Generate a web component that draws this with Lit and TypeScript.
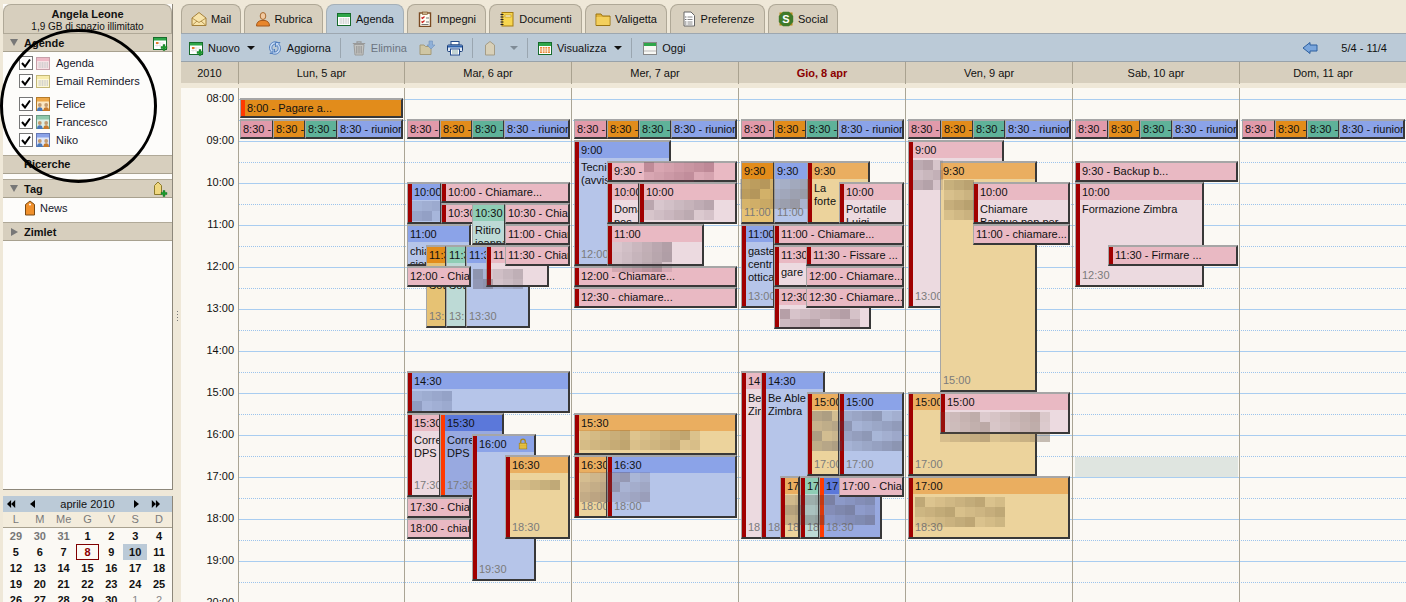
import { LitElement, html, svg, css } from "lit";
import { customElement } from "lit/decorators.js";

// --- icons, all on a 16 unit box
const svg16 = (body: unknown, size = 16) =>
  html`<svg class="ic" width=${size} height=${size} viewBox="0 0 16 16">${body}</svg>`;

const plus = svg`<path d="M11 9.5h2v2h2v2h-2v2h-2v-2H9v-2h2z" fill="#1c9a2e" stroke="#0b6a19" stroke-width=".4"/>`;
const calBase = (top: string, line: string, fill = "#fff") => svg`
  <rect x="1.5" y="2.5" width="13" height="12" fill=${fill} stroke=${line}/>
  <rect x="2" y="3" width="12" height="3" fill=${top}/>
  <path d="M3 8h10M3 10h10M3 12h10M5 7v6M7.5 7v6M10 7v6M12.5 7v6" stroke="#ccc" stroke-width=".7"/>`;
const calPeople = (top: string, line: string, fill: string) => svg`
  <rect x="1.5" y="1.5" width="13" height="13" fill=${fill} stroke=${line}/>
  <rect x="2" y="2" width="12" height="3.500" fill=${top}/>
  <circle cx="4.800" cy="9" r="1.900" fill="#c39a6e"/><path d="M2 15c0-3 1-3.800 2.800-3.800s2.800.8 2.800 3.800z" fill="#4a78b8"/>
  <circle cx="11.200" cy="9" r="1.900" fill="#c39a6e"/><path d="M8.400 15c0-3 1-3.800 2.800-3.800s2.800.8 2.800 3.800z" fill="#c77a2c"/>`;

const icons: Record<string, () => unknown> = {
  mail: () => svg16(svg`
    <path d="M1 7l7-5.500 7 5.500v7.500H1z" fill="#f7e3aa" stroke="#a4803a"/>
    <path d="M1 7l7 4.500L15 7M1 14.500l5-4.500M15 14.500l-5-4.500" fill="none" stroke="#a4803a" stroke-width=".8"/>`),
  person: () => svg16(svg`
    <ellipse cx="8" cy="5" rx="2.800" ry="3.500" fill="#f1c9a0" stroke="#a86a30"/>
    <path d="M1.500 15c0-3.500 2-5 4.500-5.500h4c2.500.5 4.500 2 4.500 5.500z" fill="#e8862c" stroke="#a4591d"/>`),
  cal: () => svg16(calBase("#2fa64a", "#176b2c")),
  tasks: () => svg16(svg`
    <rect x="2.500" y="2" width="11" height="13.500" fill="#fffdf4" stroke="#7a4a22" stroke-width="1.400"/>
    <rect x="5.500" y="1" width="5" height="2.500" fill="#c9b28a" stroke="#7a4a22" stroke-width=".6"/>
    <path d="M4.500 6.500l1 1 2-2M4.500 10.500l1 1 2-2" fill="none" stroke="#c22" stroke-width="1.200"/>
    <path d="M9 7h3M9 11h3M4.500 13.500h7" stroke="#777"/>`),
  notebook: () => svg16(svg`
    <rect x="3" y="1.500" width="11" height="13.500" fill="#f7d64f" stroke="#a67d12"/>
    <rect x="6" y="4" width="6" height="2" fill="#fff6c8" stroke="#a67d12" stroke-width=".5"/>
    <path d="M1.500 3.500h3M1.500 6h3M1.500 8.500h3M1.500 11h3M1.500 13.500h3" stroke="#222"/>`),
  folder: () => svg16(svg`
    <path d="M1 3h5l1.500 2H15v9.500H1z" fill="#e2b53c" stroke="#9a7412"/>
    <rect x="1.500" y="6" width="13" height="8" fill="#f3cf5c"/>`),
  prefs: () => svg16(svg`
    <path d="M3 1h7l3.500 3.500V15H3z" fill="#fff" stroke="#666"/>
    <path d="M6.500 6h5M6.500 8.500h5M6.500 11h5M6.500 13h5" stroke="#888"/>
    <path d="M4.300 6h1M4.300 8.500h1M4.300 11h1M4.300 13h1" stroke="#333"/>`),
  social: () => svg16(svg`
    <rect x="1.500" y="1.500" width="13" height="13" fill="#b38a1a"/>
    <path d="M5 .8h6l4.200 4.200v6L11 15.200H5L.8 11V5z" fill="#3f7a2a"/>
    <text x="8" y="12" text-anchor="middle" font-family="Liberation Sans" font-weight="700" font-size="11" fill="#fff">S</text>`),
  calnew: () => svg16(svg`
    <rect x="1.500" y="2.500" width="13" height="12" fill="#fff" stroke="#176b2c"/>
    <rect x="2" y="3" width="12" height="2.500" fill="#2fa64a"/>
    <path d="M3 8h9M3 10.500h6M5 7v5M8 7v5" stroke="#ddd" stroke-width=".7"/>
    <rect x="4" y="7" width="2.500" height="2" fill="#e67a2c"/>${plus}`),
  refresh: () => svg16(svg`
    <path d="M11 2.500c-4-2-8 .5-8.500 4.500-.2 2 .5 3.800 2 5l-1.500 1.500H7.500V9L6 10.500C4.500 9 4.500 6.500 6 5c1-1 3-1.500 4.500-.5z" fill="#c3d8f3" stroke="#3d6fb5" stroke-width=".8"/>
    <path d="M5 13.500c4 2 8-.5 8.500-4.500.2-2-.5-3.800-2-5L13 2.500H8.500V7L10 5.500c1.500 1.500 1.500 4 0 5.500-1 1-3 1.500-4.500.5z" fill="#c3d8f3" stroke="#3d6fb5" stroke-width=".8"/>`),
  trash: () => svg16(svg`
    <path d="M1.800 3.500h12.400M6 3V1.800h4V3" fill="none" stroke="#999" stroke-width="1.200"/>
    <path d="M3 4.500h10L12 15H4z" fill="#c3c3c0" stroke="#9c9c9a"/>
    <path d="M5.800 6v7.500M8 6v7.500M10.200 6v7.500" stroke="#929290"/>`),
  movefolder: () => svg16(svg`
    <path d="M1 5h4l1.500 1.500H12v8H1z" fill="#cfc6a4" stroke="#a49a78"/>
    <path d="M10 1h3.500v4H16l-4 4-4-4h2z" fill="#8fb0d8" stroke="#6f92bd" stroke-width=".6"/>`),
  print: () => svg16(svg`
    <rect x="4" y="1.500" width="8" height="3.500" fill="#fff" stroke="#244a8c"/>
    <rect x=".5" y="5" width="15" height="6.500" rx="1" fill="#dde7f4" stroke="#1b3f78"/>
    <rect x="1" y="5.500" width="14" height="2" fill="#2f63ae"/>
    <rect x="3.500" y="9" width="9" height="6" fill="#fff" stroke="#244a8c"/>
    <path d="M5 11h6M5 13h6" stroke="#8aa"/>`),
  tag: () => svg16(svg`
    <path d="M3.500 15V5L8 1.500 12.500 5v10z" fill="#d8d0b8" stroke="#a49c86"/>`),
  view: () => svg16(svg`
    <rect x="1.500" y="2.500" width="13" height="12" fill="#fff" stroke="#176b2c"/>
    <rect x="2" y="3" width="12" height="3" fill="#2fa64a"/>
    <rect x="3" y="7" width="10" height="6" fill="#ea8a3a"/>
    <path d="M3 9h10M3 11h10M5.500 7v6M8 7v6M10.500 7v6" stroke="#fff" stroke-width=".7"/>`),
  today: () => svg16(svg`
    <rect x="1.500" y="2.500" width="13" height="12" fill="#f8f8f4" stroke="#888"/>
    <rect x="2" y="3" width="12" height="3" fill="#2fa64a"/>
    <path d="M2 11h12" stroke="#bbb"/>`),
  back: () => svg16(svg`
    <path d="M8 2.500L1 8l7 5.500V11h7V5H8z" fill="#7aa6dc" stroke="#2c5f9e"/>`),
  calpink: () => svg16(calBase("#eeb9c6", "#c8a0aa", "#f7e2e6")),
  calyellow: () => svg16(calBase("#f7ecac", "#c4b878", "#fdf8d8")),
  calorange: () => svg16(calPeople("#eea848", "#b57b2a", "#fbe8c4")),
  calgreen: () => svg16(calPeople("#8fc8ac", "#6a9a82", "#dcefe6")),
  calblue: () => svg16(calPeople("#8ba3e8", "#6478b4", "#dfe6f7")),
  tagadd: () => svg16(svg`
    <path d="M2.500 13.500V4.500L6 1l3.500 3.500v9z" fill="#efd77f" stroke="#8c7a2c"/>${plus}`),
  tagorange: () => svg16(svg`
    <path d="M3.500 15V4.500L8 1l4.500 3.500V15z" fill="#f0902c" stroke="#7a4a14"/>
    <circle cx="8" cy="4.500" r="1" fill="#fff"/>`),
  lock: () => svg16(svg`
    <path d="M5 7V4.500a3 3 0 016 0V7" fill="none" stroke="#a88516" stroke-width="1.600"/>
    <rect x="3" y="7" width="10" height="7.500" fill="#f2cd4e" stroke="#a88516"/>
    <path d="M3.500 9.500h9M3.500 12h9" stroke="#c9a024"/>`, 12),
};
const icon = (n: string) => icons[n]();

// --- data
const tabs = [
  { label: "Mail", icon: "mail", w: 60 },
  { label: "Rubrica", icon: "person", w: 79 },
  { label: "Agenda", icon: "cal", w: 78, active: true },
  { label: "Impegni", icon: "tasks", w: 79 },
  { label: "Documenti", icon: "notebook", w: 93 },
  { label: "Valigetta", icon: "folder", w: 82 },
  { label: "Preferenze", icon: "prefs", w: 95 },
  { label: "Social", icon: "social", w: 70 },
];

const days = ["Lun, 5 apr", "Mar, 6 apr", "Mer, 7 apr", "Gio, 8 apr", "Ven, 9 apr", "Sab, 10 apr", "Dom, 11 apr"];

type Appt = {
  x: number; y: number; r: number; b: number; c: string;
  head: string; body?: string[]; foot?: string; s?: string; lock?: boolean;
};
const ev = (x: number, y: number, r: number, b: number, c: string, head: string, s = "", body?: string[], foot?: string, lock = false): Appt =>
  ({ x, y, r, b, c, head, s, body, foot, lock });

// the recurring 8:30 row repeats on each day
const daily = (x: number): Appt[] => [
  ev(x, 120, x + 34, 140, "a-pink", "8:30 - riunione"),
  ev(x + 33, 120, x + 66, 140, "a-orange", "8:30 - riunione"),
  ev(x + 65, 120, x + 98, 140, "a-green", "8:30 - riunione"),
  ev(x + 97, 120, x + 163, 140, "a-blue", "8:30 - riunione"),
];

const appts: Appt[] = [
  ev(240, 99, 403, 119, "a-orange", "8:00 - Pagare a...", "hot"),
  ...daily(240), ...daily(407), ...daily(574), ...daily(741), ...daily(908), ...daily(1075), ...daily(1242),
  // Tuesday
  ev(407, 183, 442, 225, "blue", "10:00", "red"),
  ev(441, 204, 474, 225, "pink", "10:30", "red"),
  ev(472, 204, 506, 246, "green", "10:30", "", ["Ritiro", "joanna"]),
  ev(407, 225, 471, 267, "blue", "11:00", "", ["chia", "sier"]),
  ev(426, 246, 447, 329, "orange2", "11:30", "", ["", "Sot"], "13:"),
  ev(446, 246, 467, 329, "green", "11:30", "", ["", "Sot"], "13:"),
  ev(466, 246, 530, 329, "blue", "11:30", "", undefined, "13:30"),
  ev(486, 246, 549, 288, "pink", "11:30", "red"),
  ev(407, 267, 471, 288, "pink", "12:00 - Chiamare..."),
  ev(441, 183, 570, 204, "pink", "10:00 - Chiamare...", "red"),
  ev(505, 204, 570, 225, "pink", "10:30 - Chiamare..."),
  ev(505, 225, 570, 246, "pink", "11:00 - Chiamare..."),
  ev(505, 246, 570, 267, "pink", "11:30 - Chiamare..."),
  ev(407, 372, 570, 414, "blue", "14:30", "red"),
  ev(407, 414, 441, 498, "pink", "15:30", "red", ["Corretto", "DPS"], "17:30"),
  ev(440, 414, 504, 498, "dblue", "15:30", "hot", ["Corretto", "DPS"], "17:30"),
  ev(472, 435, 536, 582, "blue", "16:00", "red", undefined, "19:30", true),
  ev(505, 456, 570, 540, "orange", "16:30", "red", undefined, "18:30"),
  ev(407, 498, 471, 519, "pink", "17:30 - Chiamare..."),
  ev(407, 519, 471, 540, "pink", "18:00 - chiamare..."),
  // Wednesday
  ev(574, 141, 671, 267, "blue", "9:00", "red", ["Tecnico", "(avvisare)"], "12:00"),
  ev(607, 162, 737, 183, "pink", "9:30 -", "red"),
  ev(607, 183, 640, 225, "pink", "10:00", "red", ["Domanda", "pos"]),
  ev(639, 183, 737, 225, "pink", "10:00", "red"),
  ev(607, 225, 704, 267, "pink", "11:00", "red"),
  ev(574, 267, 737, 288, "pink", "12:00 - Chiamare...", "red"),
  ev(574, 288, 737, 309, "pink", "12:30 - chiamare...", "red"),
  ev(574, 414, 737, 456, "orange", "15:30", "red"),
  ev(574, 456, 608, 519, "orange", "16:30", "red", undefined, "18:00"),
  ev(607, 456, 737, 519, "blue", "16:30", "red", undefined, "18:00"),
  // Thursday
  ev(741, 162, 775, 225, "orange2", "9:30", "", undefined, "11:00"),
  ev(774, 162, 838, 225, "blue", "9:30", "", undefined, "11:00"),
  ev(807, 162, 870, 225, "orange", "9:30", "red", ["La", "forte"]),
  ev(839, 183, 904, 225, "pink", "10:00", "red", ["Portatile", "Luigi"]),
  ev(741, 225, 775, 309, "blue", "11:00", "red", ["gaste", "centr", "ottica"], "13:00"),
  ev(774, 246, 808, 288, "pink", "11:30", "red", ["gare"]),
  ev(774, 288, 871, 330, "pink", "12:30", "red"),
  ev(774, 225, 904, 246, "pink", "11:00 - Chiamare...", "red"),
  ev(806, 246, 904, 267, "pink", "11:30 - Fissare ...", "red"),
  ev(806, 267, 904, 288, "pink", "12:00 - Chiamare..."),
  ev(806, 288, 904, 309, "pink", "12:30 - Chiamare..."),
  ev(741, 372, 775, 540, "pink", "14:30", "red", ["Be Able", "Zimbra"], "18:30"),
  ev(761, 372, 825, 540, "blue", "14:30", "red", ["Be Able", "Zimbra"], "18:30"),
  ev(807, 393, 840, 477, "orange", "15:00", "red", undefined, "17:00"),
  ev(839, 393, 904, 477, "blue", "15:00", "red", undefined, "17:00"),
  ev(780, 477, 800, 540, "orange", "17:00", "red", undefined, "18"),
  ev(800, 477, 820, 540, "green", "17:00", "red", undefined, "18"),
  ev(819, 477, 882, 540, "dblue", "17:00", "hot", undefined, "18:30"),
  ev(839, 477, 904, 498, "pink", "17:00 - Chiamare..."),
  // Friday
  ev(908, 141, 1004, 309, "pink", "9:00", "red", undefined, "13:00"),
  ev(940, 162, 1037, 393, "orange", "9:30", "", undefined, "15:00"),
  ev(973, 183, 1070, 225, "pink", "10:00", "red", ["Chiamare", "Banque pop per"]),
  ev(973, 225, 1070, 246, "pink", "11:00 - chiamare..."),
  ev(908, 393, 1037, 477, "orange", "15:00", "red", undefined, "17:00"),
  ev(940, 393, 1070, 435, "pink", "15:00", "red"),
  ev(908, 477, 1070, 540, "orange", "17:00", "red", undefined, "18:30"),
  // Saturday
  ev(1075, 162, 1238, 183, "pink", "9:30 - Backup b...", "red"),
  ev(1075, 183, 1204, 288, "pink", "10:00", "red", ["Formazione Zimbra"], "12:30"),
  ev(1108, 246, 1238, 267, "pink", "11:30 - Firmare ...", "red"),
];

// blurred out patches of the original, in page coordinates
type Patch = { x: number; y: number; cols: number; rows: number; tint: string };
const patches: Patch[] = [
  { x: 412, y: 201, cols: 3, rows: 2, tint: "90,100,140" },
  { x: 473, y: 269, cols: 5, rows: 2, tint: "70,60,70" },
  { x: 412, y: 391, cols: 4, rows: 2, tint: "80,90,130" },
  { x: 510, y: 480, cols: 5, rows: 1, tint: "100,80,40" },
  { x: 644, y: 162, cols: 7, rows: 2, tint: "120,60,80" },
  { x: 644, y: 200, cols: 7, rows: 2, tint: "100,80,90" },
  { x: 612, y: 242, cols: 6, rows: 3, tint: "80,60,70" },
  { x: 580, y: 430, cols: 12, rows: 2, tint: "120,90,40" },
  { x: 580, y: 472, cols: 7, rows: 3, tint: "90,70,80" },
  { x: 740, y: 179, cols: 7, rows: 3, tint: "100,80,50" },
  { x: 780, y: 309, cols: 8, rows: 2, tint: "90,60,70" },
  { x: 812, y: 411, cols: 9, rows: 4, tint: "70,70,90" },
  { x: 785, y: 495, cols: 9, rows: 3, tint: "70,60,60" },
  { x: 913, y: 160, cols: 3, rows: 3, tint: "90,70,80" },
  { x: 944, y: 180, cols: 3, rows: 4, tint: "100,80,40" },
  { x: 940, y: 412, cols: 11, rows: 3, tint: "110,90,70" },
  { x: 915, y: 497, cols: 9, rows: 3, tint: "110,90,50" },
];

const weeks = [
  [29, 30, 31, 1, 2, 3, 4],
  [5, 6, 7, 8, 9, 10, 11],
  [12, 13, 14, 15, 16, 17, 18],
  [19, 20, 21, 22, 23, 24, 25],
  [26, 27, 28, 29, 30, 1, 2],
];

@customElement("app-root")
export class AppRoot extends LitElement {
  static styles = css`
    :host {
      display: block;
      width: 1406px;
      height: 602px;
      overflow: hidden;
      position: relative;
      background: #efe8d8;
      font: 11px "Liberation Sans", Arial, sans-serif;
      color: #111;
    }
    .ic { display: block; flex: none; }
    .shell { display: flex; height: 602px; }

    /* left column */
    .side { width: 170px; margin-left: 3px; display: flex; flex-direction: column; flex: none; }
    .panel {
      height: 486px;
      flex: none;
      margin-top: 4px;
      background: #fdfcfa;
      border-right: 1px solid #8d877a;
      border-bottom: 1px solid #8d877a;
      box-sizing: border-box;
      display: flex;
      flex-direction: column;
    }
    .acct {
      height: 29px;
      flex: none;
      background: #d7cfbe;
      border: 1px solid #b0a998;
      border-bottom: none;
      border-radius: 8px 8px 0 0;
      box-sizing: border-box;
      text-align: center;
      padding-top: 3px;
    }
    .acct b { display: block; line-height: 13px; }
    .acct span { display: block; font-size: 10px; line-height: 11px; }
    .sec {
      height: 19px;
      flex: none;
      background: #d7cfbe;
      border-top: 1px solid #b0a998;
      border-bottom: 1px solid #a8a18f;
      box-sizing: border-box;
      display: flex;
      align-items: center;
      padding-left: 4px;
      font-weight: 700;
    }
    .sec .lbl { margin-left: 6px; flex: 1; }
    .sec.nogl .lbl { margin-left: 17px; margin-top: -1px; }
    .sec .ic { margin-right: 4px; }
    .tri-d { width: 0; height: 0; border: 4px solid transparent; border-top: 7px solid #777; border-bottom: none; margin-left: 3px; }
    .tri-r { width: 0; height: 0; border: 4px solid transparent; border-left: 7px solid #777; border-right: none; margin-left: 4px; }
    .list { padding-top: 2px; padding-bottom: 6px; flex: none; }
    .row { height: 18px; display: flex; align-items: center; padding-left: 16px; flex: none; }
    .row.gap { margin-top: 5px; }
    .chk {
      width: 12px;
      height: 12px;
      border: 1px solid #777;
      background: #fff;
      margin-right: 2px;
      display: flex;
      align-items: center;
      justify-content: center;
    }
    .row .name { margin-left: 5px; color: #15172a; }
    .tagrow { padding-left: 19px; margin-top: 1px; margin-bottom: 5px; }
    .tagrow .name { margin-left: 2px; }
    .spacer5 { height: 5px; flex: none; }

    .mini { margin-top: 6px; background: #fbf9f4; border-right: 1px solid #8d877a; flex: none; }
    .mini-head {
      height: 16px;
      background: #bbcad7;
      display: flex;
      align-items: center;
      padding: 0 12px 0 4px;
    }
    .mini-head .title { flex: 1; text-align: center; padding-left: 6px; }
    .mini-head svg { display: block; }
    .mini-head .n2 { margin-left: 14px; }
    .mini-head .n3 { margin-right: 12px; }
    .dow, .wk { display: grid; grid-template-columns: repeat(7, 1fr); text-align: center; padding: 0 1px; }
    .dow { height: 16px; line-height: 15px; background: #f3ecdc; border-bottom: 1px solid #a8a18f; box-sizing: border-box; color: #7a7a7a; }
    .wk { height: 16px; line-height: 16px; font-weight: 700; }
    .wk .off { color: #777; }
    .wk .off2 { color: #888; font-weight: 400; }
    .wk .today { outline: 1px solid #800000; outline-offset: -1px; color: #8b0000; }
    .wk .sel { background: #bbcad7; }

    /* sash */
    .sash { width: 8px; flex: none; display: flex; align-items: center; justify-content: center; }
    .grip { width: 3px; height: 12px; background: radial-gradient(circle, #777 .6px, transparent .8px) 0 0 / 3px 3px; margin-top: 30px; }

    /* main */
    .main { flex: 1; display: flex; flex-direction: column; min-width: 0; }
    .tabs { display: flex; gap: 3px; height: 33px; padding-top: 4px; box-sizing: border-box; flex: none; }
    .tab {
      background: #d7cfbe;
      border: 1px solid #afa897;
      border-bottom: none;
      border-radius: 8px 8px 0 0;
      box-sizing: border-box;
      display: flex;
      align-items: center;
      justify-content: center;
      gap: 4px;
    }
    .tab.on { background: #bbcad7; border-color: #a5b0b8; }
    .bar {
      height: 29px;
      flex: none;
      background: #bbcad7;
      border-top: 1px solid #9da7b0;
      border-bottom: 1px solid #98a2aa;
      box-sizing: border-box;
      display: flex;
      align-items: center;
      padding-left: 7px;
    }
    .bar .it { display: flex; align-items: center; gap: 4px; }
    .bar .dim { color: #6b7480; }
    .bar .sep { width: 1px; height: 20px; background: #9aa6b0; }
    .bar .arr { width: 0; height: 0; border: 4px solid transparent; border-top: 4px solid #111; border-bottom: none; }
    .bar .arr.dim2 { border-top-color: #7f8b96; }
    .bar .range { margin-right: 19px; }

    .dayhead { display: grid; grid-template-columns: 57px 166px repeat(6, 167px); height: 21px; flex: none; background: #d7cfbe; }
    .dayhead div { text-align: center; line-height: 22px; border-left: 1px solid #a9a290; box-sizing: border-box; }
    .dayhead div:first-child { border-left: none; }
    .dayhead .now { color: #8b0000; font-weight: 700; }
    .cgap { height: 5px; flex: none; }

    .grid { flex: 1; display: flex; background: #fbf9f4; min-height: 0; overflow: hidden; }
    .hours { width: 57px; flex: none; padding-top: 4px; }
    .hours div { height: 42px; line-height: 12px; text-align: right; padding-right: 4px; box-sizing: border-box; }
    .canvas { flex: 1; position: relative; padding-top: 11px; min-width: 0; }
    .slot { height: 21px; box-sizing: border-box; border-top: 1px dotted #9cc4ec; }
    .slot.h { border-top: 1px solid #a9cdf0; }
    .vlines { position: absolute; inset: 0; display: grid; grid-template-columns: 166px repeat(6, 167px); }
    .vlines div { border-left: 1px solid #aaa595; }

    .appt {
      position: absolute;
      box-sizing: border-box;
      border-style: solid;
      border-width: 2px 2px 2px 1px;
      border-color: #a6a6a6 #383838 #383838 #a6a6a6;
      overflow: hidden;
      display: flex;
      background: var(--b);
    }
    .stripe { width: 4px; flex: none; background: #a00000; }
    .stripe.hot { background: #ff3a00; }
    .inner { flex: 1; min-width: 0; display: flex; flex-direction: column; position: relative; }
    .head { height: 16px; flex: none; line-height: 16px; padding-left: 2px; background: var(--h); white-space: nowrap; overflow: hidden; }
    .one .head { height: 100%; }
    .body { flex: 1; min-height: 0; padding: 3px 0 0 2px; line-height: 13px; white-space: nowrap; overflow: hidden; }
    .foot { flex: none; line-height: 14px; height: 17px; padding-left: 2px; color: #7b7b7b; white-space: nowrap; }
    .padlock { position: absolute; right: 5px; top: 2px; }

    .pink { --h: #e9b9c3; --b: #ecdae0; }
    .blue { --h: #8ba3e8; --b: #b6c5e9; }
    .dblue { --h: #5b78da; --b: #98a9e0; }
    .orange { --h: #eaae60; --b: #ecd39c; }
    .orange2 { --h: #e28c1b; --b: #e6c274; }
    .green { --h: #8fcdb5; --b: #bddad6; }
    .a-pink { --h: #e19aaa; --b: #e19aaa; }
    .a-orange { --h: #e28c1b; --b: #e28c1b; }
    .a-green { --h: #5fb299; --b: #5fb299; }
    .a-blue { --h: #8ba3e8; --b: #8ba3e8; }

    .patch { position: absolute; display: flex; flex-wrap: wrap; }
    .patch i { display: block; width: 10px; height: 10px; }
    .selrange { position: absolute; height: 20px; background: #dfe5e0; }
    .ring { position: absolute; left: 0; top: 0; pointer-events: none; }
  `;

  private renderAppt(a: Appt) {
    const h = a.b - a.y;
    return html`<div
      class="appt ${a.c} ${h <= 22 ? "one" : ""}"
      style="left:${a.x - 238}px;top:${a.y - 88 - 1}px;width:${a.r - a.x}px;height:${h}px"
    >
      ${a.s ? html`<div class="stripe ${a.s === "hot" ? "hot" : ""}"></div>` : ""}
      <div class="inner">
        <div class="head">${a.head}</div>
        ${h > 22
          ? html`<div class="body">${(a.body || []).map((l) => html`<div>${l || "\u00a0"}</div>`)}</div>`
          : ""}
        ${a.foot ? html`<div class="foot">${a.foot}</div>` : ""}
        ${a.lock ? html`<div class="padlock">${icon("lock")}</div>` : ""}
      </div>
    </div>`;
  }

  private renderPatch(p: Patch) {
    const cells = [];
    for (let i = 0; i < p.cols * p.rows; i++) {
      // cheap repeatable noise so the blur looks uneven
      const a = 0.12 + (((i * 37 + p.x) % 17) / 17) * 0.28;
      cells.push(html`<i style="background:rgba(${p.tint},${a.toFixed(2)})"></i>`);
    }
    return html`<div class="patch" style="left:${p.x - 238}px;top:${p.y - 88}px;width:${p.cols * 10}px">${cells}</div>`;
  }

  private renderSide() {
    const cals = [
      { n: "Agenda", i: "calpink" },
      { n: "Email Reminders", i: "calyellow" },
      { n: "Felice", i: "calorange", gap: true },
      { n: "Francesco", i: "calgreen" },
      { n: "Niko", i: "calblue" },
    ];
    const check = html`<svg width="10" height="10" viewBox="0 0 10 10"><path d="M1 5l3 3.500L9 1.500" fill="none" stroke="#000" stroke-width="2"/></svg>`;
    return html`<div class="side">
      <div class="panel">
        <div class="acct"><b>Angela Leone</b><span>1,9 GB di spazio illimitato</span></div>
        <div class="sec"><span class="tri-d"></span><span class="lbl">Agende</span>${icon("calnew")}</div>
        <div class="list">
          ${cals.map(
            (c) => html`<div class="row ${c.gap ? "gap" : ""}">
              <span class="chk">${check}</span>${icon(c.i)}<span class="name">${c.n}</span>
            </div>`
          )}
        </div>
        <div class="sec nogl"><span class="lbl">Ricerche</span></div>
        <div class="spacer5"></div>
        <div class="sec"><span class="tri-d"></span><span class="lbl">Tag</span>${icon("tagadd")}</div>
        <div class="row tagrow">${icon("tagorange")}<span class="name">News</span></div>
        <div class="sec"><span class="tri-r"></span><span class="lbl">Zimlet</span></div>
      </div>
      <div class="mini">
        <div class="mini-head">
          <svg width="9" height="8" viewBox="0 0 11 8" preserveAspectRatio="none"><path d="M5 0v8L0 4zM10 0v8L5 4z"/></svg>
          <svg class="n2" width="6" height="8" viewBox="0 0 6 8"><path d="M5 0v8L0 4z"/></svg>
          <span class="title">aprile 2010</span>
          <svg class="n3" width="6" height="8" viewBox="0 0 6 8"><path d="M1 0v8l5-4z"/></svg>
          <svg width="9" height="8" viewBox="0 0 11 8" preserveAspectRatio="none"><path d="M1 0v8l5-4zM6 0v8l5-4z"/></svg>
        </div>
        <div class="dow">${["L", "M", "Me", "G", "V", "S", "D"].map((d) => html`<div>${d}</div>`)}</div>
        ${weeks.map(
          (w, wi) => html`<div class="wk">
            ${w.map((d, i) => {
              let cls = "";
              if (wi === 0 && i < 3) cls = "off";
              if (wi === 4 && i > 4) cls = "off2";
              if (wi === 1 && d === 8) cls = "today";
              if (wi === 1 && d === 10) cls = "sel";
              return html`<div class=${cls}>${d}</div>`;
            })}
          </div>`
        )}
      </div>
    </div>`;
  }

  private renderToolbar() {
    return html`<div class="bar">
      <div class="it">${icon("calnew")}<span>Nuovo</span></div>
      <span class="arr" style="margin-left:7px"></span>
      <div class="it" style="margin-left:12px">${icon("refresh")}<span>Aggiorna</span></div>
      <span class="sep" style="margin-left:9px"></span>
      <div class="it dim" style="margin-left:10px">${icon("trash")}<span>Elimina</span></div>
      <div class="it" style="margin-left:12px">${icon("movefolder")}</div>
      <div class="it" style="margin-left:12px">${icon("print")}</div>
      <span class="sep" style="margin-left:9px"></span>
      <div class="it" style="margin-left:9px">${icon("tag")}</div>
      <span class="arr dim2" style="margin-left:12px"></span>
      <span class="sep" style="margin-left:9px"></span>
      <div class="it" style="margin-left:9px">${icon("view")}<span>Visualizza</span></div>
      <span class="arr" style="margin-left:8px"></span>
      <span class="sep" style="margin-left:9px"></span>
      <div class="it" style="margin-left:10px">${icon("today")}<span>Oggi</span></div>
      <div class="it" style="margin-left:auto">${icon("back")}</div>
      <span class="range" style="margin-left:23px">5/4 - 11/4</span>
    </div>`;
  }

  render() {
    const hours = ["08", "09", "10", "11", "12", "13", "14", "15", "16", "17", "18", "19", "20"];
    const slots = Array.from({ length: 25 }, (_, i) => i);
    return html`<div class="shell">
        ${this.renderSide()}
        <div class="sash"><div class="grip"></div></div>
        <div class="main">
          <div class="tabs">
            ${tabs.map(
              (t) => html`<div class="tab ${t.active ? "on" : ""}" style="width:${t.w}px">${icon(t.icon)}<span>${t.label}</span></div>`
            )}
          </div>
          ${this.renderToolbar()}
          <div class="dayhead">
            <div>2010</div>
            ${days.map((d, i) => html`<div class=${i === 3 ? "now" : ""}>${d}</div>`)}
          </div>
          <div class="cgap"></div>
          <div class="grid">
            <div class="hours">${hours.map((h) => html`<div>${h}:00</div>`)}</div>
            <div class="canvas">
              ${slots.map((i) => html`<div class="slot ${i % 2 === 0 ? "h" : ""}"></div>`)}
              <div class="vlines">${days.map(() => html`<div></div>`)}</div>
              <div class="selrange" style="left:${1075 - 238}px;top:${457 - 88}px;width:${1238 - 1075}px"></div>
              ${appts.map((a) => this.renderAppt(a))}
              ${patches.map((p) => this.renderPatch(p))}
            </div>
          </div>
        </div>
      </div>
      <svg class="ring" width="170" height="190">
        <ellipse cx="78.500" cy="106" rx="77" ry="75.500" fill="none" stroke="#000" stroke-width="3"/>
      </svg>`;
  }
}
